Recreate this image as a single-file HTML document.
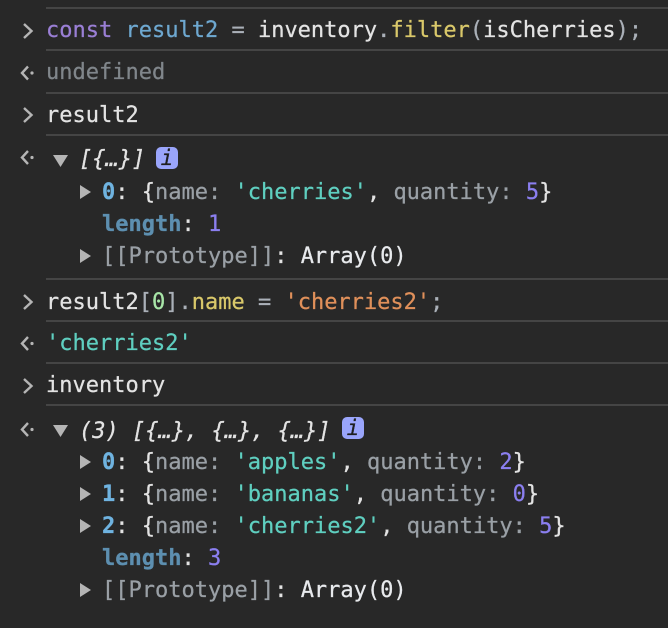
<!DOCTYPE html>
<html><head><meta charset="utf-8">
<style>
html,body{margin:0;padding:0;background:#282828;}
#p{position:relative;width:668px;height:628px;overflow:hidden;background:#282828;font-family:"DejaVu Sans Mono","Liberation Mono",monospace;font-size:22px;color:#e3e3e3;-webkit-text-stroke:0.25px currentColor;}
.r{position:absolute;white-space:pre;line-height:32px;height:32px;}
.s{position:absolute;left:46px;right:0;height:2px;background:#454545;}
svg{position:absolute;}
.kw{color:#9a7fd5}.v{color:#6ea8d0}.m{color:#d9c86a}.st{color:#5fcfc0}.g{color:#9aa0a6}.n{color:#8b7ff0}.u{color:#80868b}.or{color:#e0905a}.ln{color:#a8e6a8}
.k{color:#6fb3e0;font-weight:bold}.l{color:#5d8fb0;font-weight:bold}.w{color:#e8eaed}.i{font-style:italic}.p{color:#aab0b8}
.b{position:absolute;width:22px;height:22px;border-radius:5px;background:#9aa5fb;color:#1e1e1e;font:italic 21px/22px "DejaVu Sans Mono",monospace;text-align:center;}
</style></head><body><div id="p">
<div class="s" style="top:7px"></div>
<div class="s" style="top:49px"></div>
<div class="s" style="top:92px"></div>
<div class="s" style="top:134px"></div>
<div class="s" style="top:278px"></div>
<div class="s" style="top:320px"></div>
<div class="s" style="top:362px"></div>
<div class="s" style="top:404px"></div>

<svg width="668" height="628" style="left:0;top:0">
<g fill="none" stroke="#b5b5b5" stroke-width="2.4">
<path d="M24 24l7.500 7l-7.500 7"/>
<path d="M24 108l7.500 7l-7.500 7"/>
<path d="M24 295l7.500 7l-7.500 7"/>
<path d="M24 379l7.500 7l-7.500 7"/>
<path d="M28 66.500l-6 6.500l6 6.500"/>
<path d="M28 151l-6 6.500l6 6.500"/>
<path d="M28 337l-6 6.500l6 6.500"/>
<path d="M28 423l-6 6.500l6 6.500"/>
</g>
<g fill="#b5b5b5">
<circle cx="32" cy="73" r="1.600"/>
<circle cx="32" cy="157.500" r="1.600"/>
<circle cx="32" cy="343.500" r="1.600"/>
<circle cx="32" cy="429.500" r="1.600"/>
<path d="M53 155h15l-7.500 12z"/>
<path d="M53 425h15l-7.500 12z"/>
<path d="M80 185v14l11-7z"/>
<path d="M80 249v14l11-7z"/>
<path d="M80 455v14l11-7z"/>
<path d="M80 487v14l11-7z"/>
<path d="M80 519v14l11-7z"/>
<path d="M80 583v14l11-7z"/>
</g>
</svg>

<div class="r" style="left:46px;top:15px"><span class="kw">const</span> <span class="v">result2</span> <span class="p">=</span> inventory<span class="p">.</span><span class="m">filter</span><span class="p">(</span>isCherries<span class="p">);</span></div>
<div class="r u" style="left:46px;top:57px">undefined</div>
<div class="r" style="left:46px;top:100px">result2</div>
<div class="r i" style="left:79px;top:144px">[{…}]</div>
<div class="b" style="left:156px;top:147px">i</div>
<div class="r" style="left:102px;top:177px"><span class="k">0</span>: {<span class="g">name:</span> <span class="st">'cherries'</span>, <span class="g">quantity:</span> <span class="n">5</span>}</div>
<div class="r" style="left:102px;top:209px"><span class="l">length</span>: <span class="n">1</span></div>
<div class="r" style="left:102px;top:241px"><span class="g">[[Prototype]]</span>: <span class="w">Array(0)</span></div>
<div class="r" style="left:46px;top:287px">result2<span class="p">[</span><span class="ln">0</span><span class="p">].</span><span class="m">name</span> <span class="p">=</span> <span class="or">'cherries2'</span><span class="p">;</span></div>
<div class="r st" style="left:46px;top:328px">'cherries2'</div>
<div class="r" style="left:46px;top:370px">inventory</div>
<div class="r i" style="left:79px;top:416px">(3) [{…}, {…}, {…}]</div>
<div class="b" style="left:342px;top:417px">i</div>
<div class="r" style="left:102px;top:447px"><span class="k">0</span>: {<span class="g">name:</span> <span class="st">'apples'</span>, <span class="g">quantity:</span> <span class="n">2</span>}</div>
<div class="r" style="left:102px;top:479px"><span class="k">1</span>: {<span class="g">name:</span> <span class="st">'bananas'</span>, <span class="g">quantity:</span> <span class="n">0</span>}</div>
<div class="r" style="left:102px;top:511px"><span class="k">2</span>: {<span class="g">name:</span> <span class="st">'cherries2'</span>, <span class="g">quantity:</span> <span class="n">5</span>}</div>
<div class="r" style="left:102px;top:543px"><span class="l">length</span>: <span class="n">3</span></div>
<div class="r" style="left:102px;top:575px"><span class="g">[[Prototype]]</span>: <span class="w">Array(0)</span></div>
</div></body></html>
